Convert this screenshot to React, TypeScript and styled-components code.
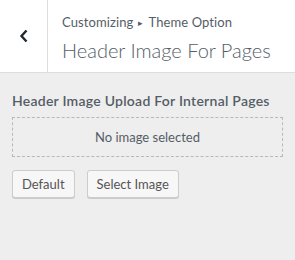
import React from 'react';
import styled, { createGlobalStyle } from 'styled-components';

const GlobalStyle = createGlobalStyle`
    html, body {
        margin: 0;
        padding: 0;
        background: #eeeeee;
    }
    body {
        font-family: Lato, "Liberation Sans", sans-serif;
        color: #555d66;
    }
`;

const Panel = styled.div`
    width: 295px;
    height: 260px;
    background: #eeeeee;
`;

const Header = styled.div`
    display: flex;
    height: 72px;
    background: #fff;
    border-bottom: 1px solid #dddddd;
`;

const BackButton = styled.button`
    width: 48px;
    flex: none;
    display: flex;
    align-items: center;
    justify-content: center;
    border: 0;
    border-right: 1px solid #dddddd;
    background: #fff;
    padding: 0;
    color: #23282d;
`;

const HeaderText = styled.div`
    padding: 12px 0 0 14px;
    display: flex;
    flex-direction: column;
`;

const Crumb = styled.span`
    font-size: 13px;
    line-height: 20px;
    color: #555d66;
    letter-spacing: 0.1px;
`;

const Arrow = styled.span`
    font-size: 9px;
    margin: 0 5px;
    vertical-align: 1px;
`;

const Title = styled.h3`
    margin: 4px 0 0;
    font-size: 20px;
    font-weight: 300;
    line-height: 26px;
    color: #555d66;
`;

const Section = styled.div`
    padding: 18px 12px 0;
`;

const Label = styled.div`
    font-size: 14px;
    font-weight: 600;
    line-height: 20px;
    color: #555d66;
    letter-spacing: 0.25px;
    white-space: nowrap;
`;

const Placeholder = styled.div`
    margin-top: 6px;
    height: 38px;
    display: flex;
    align-items: center;
    justify-content: center;
    border: 1px dashed #b4b9be;
    font-size: 13px;
    color: #555d66;
`;

const Actions = styled.div`
    display: flex;
    gap: 12px;
    margin-top: 13px;
`;

const Button = styled.button`
    height: 28px;
    padding: 0 9px;
    border: 1px solid #cccccc;
    border-radius: 3px;
    background: #f7f7f7;
    box-shadow: 0 1px 0 #cccccc;
    font-family: inherit;
    font-size: 13px;
    color: #555555;
`;

const App = () => {
    return (
        <Panel>
            <GlobalStyle />
            <Header>
                <BackButton aria-label="Back">
                    <svg width="10" height="14" viewBox="0 0 10 14">
                        <path d="M7.5 1.5 L2.5 7 L7.5 12.5" fill="none" stroke="#23282d" strokeWidth="2.4" />
                    </svg>
                </BackButton>
                <HeaderText>
                    <Crumb>
                        Customizing<Arrow>▸</Arrow>Theme Option
                    </Crumb>
                    <Title>Header Image For Pages</Title>
                </HeaderText>
            </Header>
            <Section>
                <Label>Header Image Upload For Internal Pages</Label>
                <Placeholder>No image selected</Placeholder>
                <Actions>
                    <Button>Default</Button>
                    <Button>Select Image</Button>
                </Actions>
            </Section>
        </Panel>
    );
};

export default App;
